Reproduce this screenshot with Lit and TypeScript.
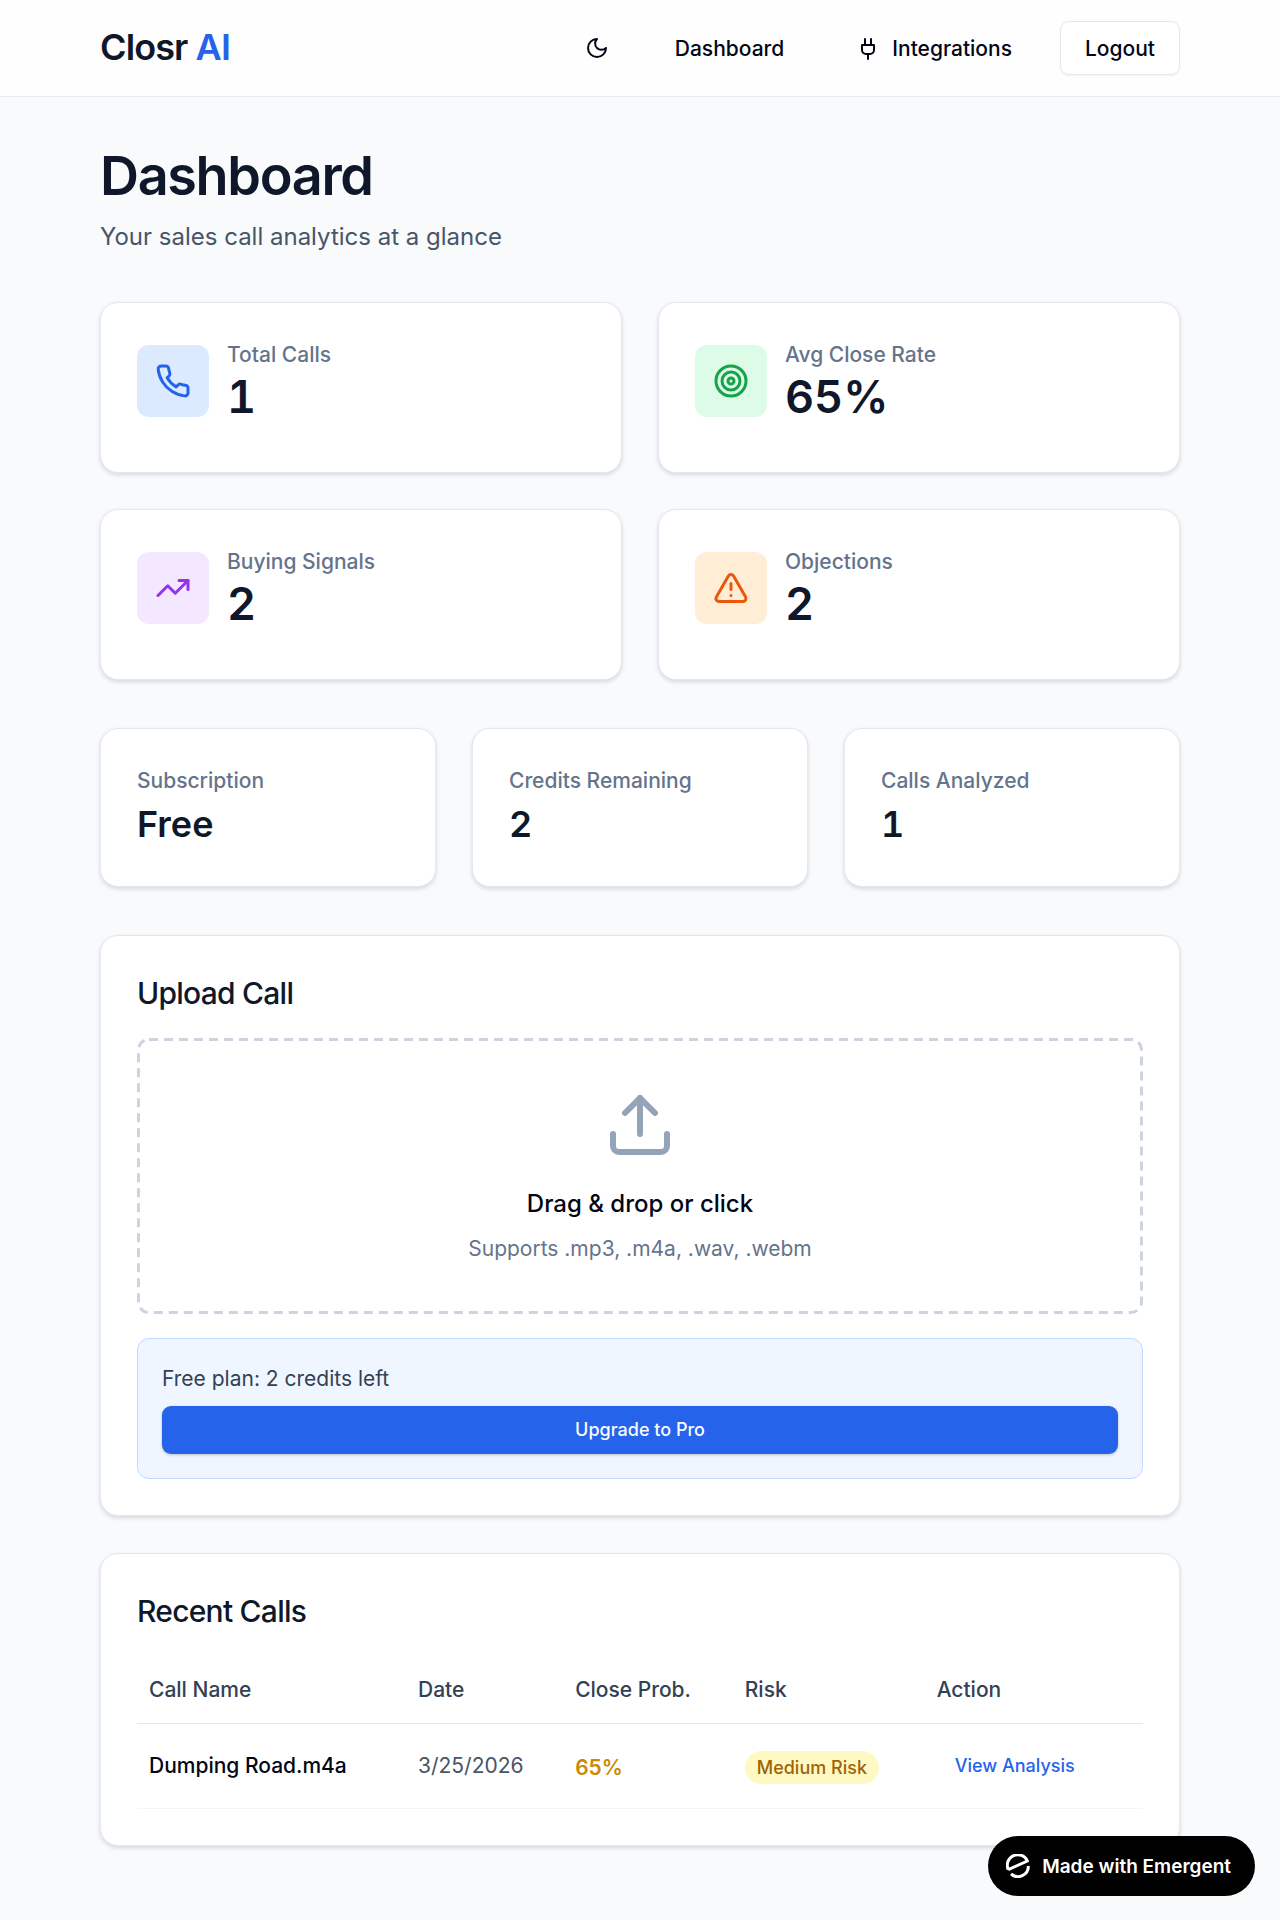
import { LitElement, html, css, svg, TemplateResult } from "lit";
import { customElement, property } from "lit/decorators.js";
import { classMap } from "lit/directives/class-map.js";

const icons: Record<string, TemplateResult> = {
  moon: svg`<path d="M12 3a6 6 0 0 0 9 9 9 9 0 1 1-9-9Z"/>`,
  plug: svg`<path d="M12 22v-5"/><path d="M9 8V2"/><path d="M15 8V2"/><path d="M18 8v5a4 4 0 0 1-4 4h-4a4 4 0 0 1-4-4V8Z"/>`,
  phone: svg`<path d="M22 16.92v3a2 2 0 0 1-2.18 2 19.79 19.79 0 0 1-8.63-3.07 19.5 19.5 0 0 1-6-6 19.79 19.79 0 0 1-3.07-8.67A2 2 0 0 1 4.11 2h3a2 2 0 0 1 2 1.72 12.84 12.84 0 0 0 .7 2.81 2 2 0 0 1-.45 2.11L8.09 9.91a16 16 0 0 0 6 6l1.27-1.27a2 2 0 0 1 2.11-.45 12.84 12.84 0 0 0 2.81.7A2 2 0 0 1 22 16.92z"/>`,
  target: svg`<circle cx="12" cy="12" r="10"/><circle cx="12" cy="12" r="6"/><circle cx="12" cy="12" r="2"/>`,
  trend: svg`<path d="M22 7 13.5 15.5 8.5 10.5 2 17"/><path d="M16 7h6v6"/>`,
  alert: svg`<path d="m21.73 18-8-14a2 2 0 0 0-3.48 0l-8 14A2 2 0 0 0 4 21h16a2 2 0 0 0 1.73-3"/><path d="M12 9v4"/><path d="M12 17h.01"/>`,
  upload: svg`<path d="M21 15v4a2 2 0 0 1-2 2H5a2 2 0 0 1-2-2v-4"/><path d="m17 8-5-5-5 5"/><path d="M12 3v12"/>`,
};

@customElement("ui-icon")
export class UiIcon extends LitElement {
  @property() name = "moon";

  static styles = css`
    :host {
      display: block;
      width: 24px;
      height: 24px;
      flex: none;
    }
    svg {
      display: block;
      width: 100%;
      height: 100%;
      fill: none;
      stroke: currentColor;
      stroke-width: 2;
      stroke-linecap: round;
      stroke-linejoin: round;
    }
  `;

  render() {
    return html`<svg viewBox="0 0 24 24" aria-hidden="true">${icons[this.name]}</svg>`;
  }
}

interface Stat {
  label: string;
  value: string;
  icon: string;
  tone: string;
}

interface Call {
  name: string;
  date: string;
  probability: string;
  risk: string;
}

@customElement("app-root")
export class AppRoot extends LitElement {
  private stats: Stat[] = [
    { label: "Total Calls", value: "1", icon: "phone", tone: "blue" },
    { label: "Avg Close Rate", value: "65%", icon: "target", tone: "green" },
    { label: "Buying Signals", value: "2", icon: "trend", tone: "purple" },
    { label: "Objections", value: "2", icon: "alert", tone: "orange" },
  ];

  private usage = [
    { label: "Subscription", value: "Free" },
    { label: "Credits Remaining", value: "2" },
    { label: "Calls Analyzed", value: "1" },
  ];

  private calls: Call[] = [
    { name: "Dumping Road.m4a", date: "3/25/2026", probability: "65%", risk: "Medium Risk" },
  ];

  static styles = css`
    :host {
      display: block;
      min-height: 100vh;
      box-sizing: border-box;
      background: #f8fafc;
      color: #0f172a;
      font-family: Inter, "Liberation Sans", sans-serif;
      font-size: 24px;
      line-height: 37px;
    }
    *,
    *::before,
    *::after {
      box-sizing: border-box;
    }
    h1,
    h2,
    p {
      margin: 0;
    }
    button {
      font: inherit;
      cursor: pointer;
    }
    a {
      color: inherit;
      text-decoration: none;
    }
    .bar {
      background: #fefefe;
      border-bottom: 1px solid #e8edf3;
    }
    .bar-inner {
      display: flex;
      align-items: center;
      justify-content: space-between;
      min-height: 96px;
    }
    .wrap {
      max-width: 1728px;
      margin: 0 auto;
      padding-left: 100px;
      padding-right: 100px;
    }
    .brand {
      padding-bottom: 2px;
      font-size: 36px;
      line-height: 48px;
      font-weight: 600;
      letter-spacing: -0.025em;
    }
    .brand-accent {
      color: #2563eb;
    }
    .nav {
      display: flex;
      align-items: center;
      gap: 24px;
    }
    .nav-item {
      display: inline-flex;
      align-items: center;
      gap: 12px;
      height: 54px;
      padding: 2px 24px 0;
      border: 0;
      border-radius: 9px;
      background: none;
      color: #020617;
      font-size: 21px;
      line-height: 30px;
      font-weight: 500;
    }
    .nav-item.toggle {
      padding: 0 18px;
    }
    .nav-item.outlined {
      border: 1px solid #e2e8f0;
      background: #fff;
      box-shadow: 0 1px 3px rgba(0, 0, 0, 0.05);
    }
    .main {
      padding-top: 49px;
      padding-bottom: 72px;
    }
    .title {
      font-size: 54px;
      line-height: 60px;
      font-weight: 600;
      letter-spacing: -0.025em;
    }
    .subtitle {
      margin-top: 12px;
      color: #475569;
    }
    .card {
      padding: 36px;
      border: 1px solid #e2e8f0;
      border-radius: 18px;
      background: #fff;
      box-shadow: 0 2px 4px rgba(15, 23, 42, 0.14);
    }
    .stats {
      display: grid;
      grid-template-columns: repeat(2, 1fr);
      gap: 36px;
      margin-top: 47px;
    }
    .stat {
      display: flex;
      align-items: flex-start;
      gap: 18px;
      padding-bottom: 48px;
    }
    .tile {
      margin-top: 6px;
      padding: 18px;
      border-radius: 12px;
    }
    .tile ui-icon {
      width: 36px;
      height: 36px;
    }
    .tile.blue {
      background: #dbeafe;
      color: #2563eb;
    }
    .tile.green {
      background: #dcfce7;
      color: #16a34a;
    }
    .tile.purple {
      background: #f3e8ff;
      color: #9333ea;
    }
    .tile.orange {
      background: #ffedd5;
      color: #ea580c;
    }
    .label {
      color: #64748b;
      font-size: 21px;
      line-height: 31px;
      font-weight: 500;
    }
    .figure,
    .usage-value {
      font-weight: 600;
      font-variant-numeric: tabular-nums;
    }
    .figure {
      font-size: 45px;
      line-height: 54px;
    }
    .usage {
      display: grid;
      grid-template-columns: repeat(3, 1fr);
      gap: 36px;
      margin-top: 48px;
    }
    .usage-value {
      margin-top: 4px;
      margin-bottom: 2px;
      font-size: 36px;
      line-height: 48px;
    }
    .upload {
      margin-top: 48px;
    }
    .recent {
      margin-top: 37px;
    }
    .heading {
      margin-bottom: 24px;
      font-size: 30px;
      line-height: 42px;
      font-weight: 500;
      letter-spacing: -0.025em;
    }
    .drop {
      position: relative;
      display: flex;
      flex-direction: column;
      align-items: center;
      width: 100%;
      padding: 51px 51px 50px;
      border: 0;
      border-radius: 12px;
      background: none;
      color: #020617;
    }
    .drop-outline {
      position: absolute;
      inset: 0;
      width: 100%;
      height: 100%;
      fill: none;
      stroke: #cbd5e1;
      stroke-width: 3;
      stroke-dasharray: 9 6;
    }
    .drop-outline rect {
      width: calc(100% - 3px);
      height: calc(100% - 3px);
    }
    .drop ui-icon {
      width: 72px;
      height: 72px;
      color: #94a3b8;
    }
    .drop-title {
      margin-top: 24px;
      font-weight: 500;
    }
    .drop-hint {
      margin-top: 11px;
      color: #64748b;
      font-size: 21px;
      line-height: 31px;
    }
    .plan {
      margin-top: 24px;
      padding: 24px;
      border: 1px solid #bfdbfe;
      border-radius: 12px;
      background: #eff6ff;
    }
    .plan-text {
      color: #334155;
      font-size: 21px;
      line-height: 31px;
    }
    .upgrade {
      display: block;
      width: 100%;
      height: 48px;
      margin-top: 12px;
      padding: 0 18px;
      border: 0;
      border-radius: 9px;
      background: #2563eb;
      box-shadow: 0 1px 3px rgba(0, 0, 0, 0.2);
      color: #f8fafc;
      font-size: 18px;
      line-height: 24px;
      font-weight: 500;
    }
    .calls {
      width: 100%;
      border-collapse: separate;
      border-spacing: 0;
    }
    .calls th,
    .calls td {
      padding: 18px 12px;
      text-align: left;
      vertical-align: middle;
    }
    .calls th {
      border-bottom: 1px solid #e2e8f0;
      color: #334155;
      font-size: 21px;
      line-height: 31px;
      font-weight: 500;
    }
    .calls td {
      border-bottom: 1px solid #f1f5f9;
    }
    .calls .score {
      padding-top: 20px;
      line-height: 38px;
    }
    .calls .name,
    .calls .date {
      font-size: 21px;
      line-height: 30px;
    }
    .calls .name {
      color: #020617;
      font-weight: 500;
    }
    .calls .date {
      color: #475569;
    }
    .prob {
      color: #ca8a04;
      font-size: 21px;
      font-weight: 600;
    }
    .risk {
      padding: 6px 12px;
      border-radius: 18px;
      background: #fef9c3;
      color: #a16207;
      font-size: 18px;
      font-weight: 500;
    }
    .view {
      display: flex;
      align-items: center;
      height: 48px;
      padding: 0 18px;
      border: 0;
      background: none;
      color: #2563eb;
      font-size: 18px;
      line-height: 24px;
      font-weight: 500;
    }
    .made {
      position: fixed;
      right: 25px;
      bottom: 24px;
      display: flex;
      align-items: center;
      gap: 12px;
      height: 60px;
      padding: 0 24px 0 18px;
      border-radius: 30px;
      background: #000;
      color: #fff;
      font-size: 19px;
      line-height: 24px;
      font-weight: 600;
    }
    .made-text {
      padding-top: 2px;
    }
    .made-logo {
      display: block;
      width: 24px;
      height: 24px;
    }
  `;

  render() {
    return html`
      <header class="bar">
        <div class="wrap bar-inner">
          <a class="brand" href="#">Closr <span class="brand-accent">AI</span></a>
          <nav class="nav">
            <button class="nav-item toggle" aria-label="Toggle theme"><ui-icon name="moon"></ui-icon></button>
            <a class="nav-item" href="#dashboard">Dashboard</a>
            <a class="nav-item" href="#integrations"><ui-icon name="plug"></ui-icon>Integrations</a>
            <button class="nav-item outlined">Logout</button>
          </nav>
        </div>
      </header>

      <main class="wrap main">
        <h1 class="title">Dashboard</h1>
        <p class="subtitle">Your sales call analytics at a glance</p>

        <section class="stats">
          ${this.stats.map(
            (s) => html`
              <article class="card stat">
                <div class=${classMap({ tile: true, [s.tone]: true })}><ui-icon name=${s.icon}></ui-icon></div>
                <div>
                  <p class="label">${s.label}</p>
                  <p class="figure">${s.value}</p>
                </div>
              </article>
            `
          )}
        </section>

        <section class="usage">
          ${this.usage.map(
            (u) => html`
              <article class="card">
                <p class="label">${u.label}</p>
                <p class="usage-value">${u.value}</p>
              </article>
            `
          )}
        </section>

        <section class="card upload">
          <h2 class="heading">Upload Call</h2>
          <button class="drop">
            <svg class="drop-outline" aria-hidden="true"><rect x="1.5" y="1.5" rx="10.5" /></svg>
            <ui-icon name="upload"></ui-icon>
            <span class="drop-title">Drag &amp; drop or click</span>
            <span class="drop-hint">Supports .mp3, .m4a, .wav, .webm</span>
          </button>
          <div class="plan">
            <p class="plan-text">Free plan: 2 credits left</p>
            <button class="upgrade">Upgrade to Pro</button>
          </div>
        </section>

        <section class="card recent">
          <h2 class="heading">Recent Calls</h2>
          <table class="calls">
            <thead>
              <tr>
                <th>Call Name</th>
                <th>Date</th>
                <th>Close Prob.</th>
                <th>Risk</th>
                <th>Action</th>
              </tr>
            </thead>
            <tbody>
              ${this.calls.map(
                (c) => html`
                  <tr>
                    <td class="name">${c.name}</td>
                    <td class="date">${c.date}</td>
                    <td class="score"><span class="prob">${c.probability}</span></td>
                    <td class="score"><span class="risk">${c.risk}</span></td>
                    <td><button class="view">View Analysis</button></td>
                  </tr>
                `
              )}
            </tbody>
          </table>
        </section>
      </main>

      <a class="made" href="#emergent">
        <svg class="made-logo" viewBox="0 0 24 24" fill="none" stroke="#fff" stroke-width="3" aria-hidden="true">
          <path stroke-linejoin="round" d="M2.2 15.6A10.3 10.3 0 0 1 21.4 7L2.2 15.6" />
          <path d="M5 19.9A10.3 10.3 0 0 0 22.3 12" />
        </svg>
        <span class="made-text">Made with Emergent</span>
      </a>
    `;
  }
}
